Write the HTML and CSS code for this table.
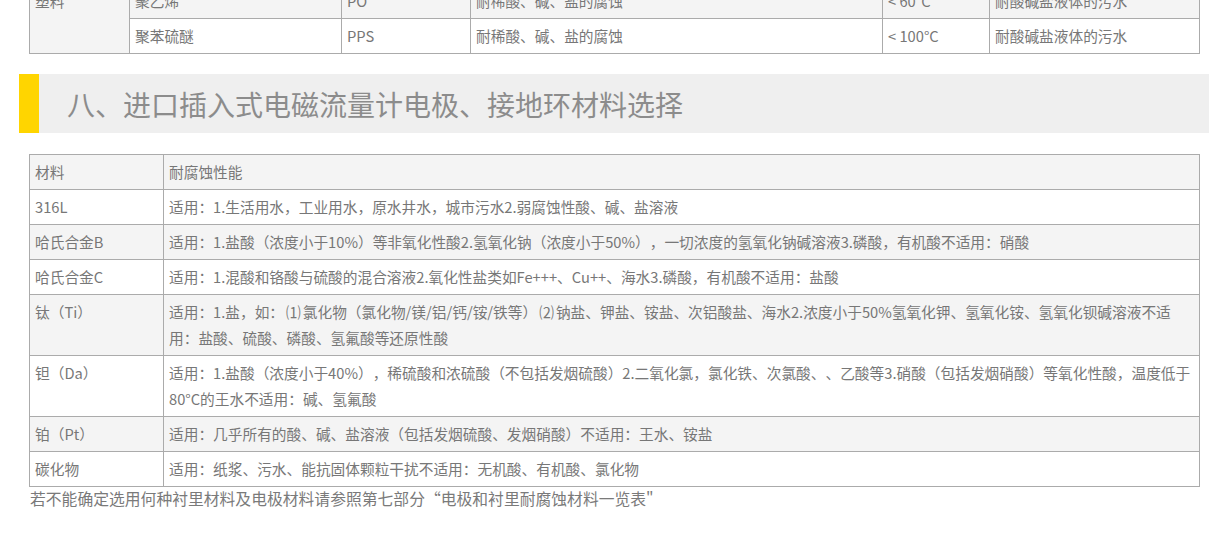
FILE: index.html
```html
<!DOCTYPE html>
<html lang="zh-CN">
<head>
<meta charset="utf-8">
<title>电极、接地环材料选择</title>
<link rel="stylesheet" href="styles.css">
</head>
<body>
<div class="page">
  <table class="grid top-grid">
    <colgroup>
      <col class="c1"><col class="c2"><col class="c3"><col class="c4"><col class="c5"><col class="c6">
    </colgroup>
    <tr class="alt">
      <td rowspan="2" class="alt span-cell">塑料</td>
      <td>聚乙烯</td><td>PO</td><td>耐稀酸、碱、盐的腐蚀</td><td>&lt; 60°C</td><td>耐酸碱盐液体的污水</td>
    </tr>
    <tr>
      <td>聚苯硫醚</td><td>PPS</td><td>耐稀酸、碱、盐的腐蚀</td><td>&lt; 100°C</td><td>耐酸碱盐液体的污水</td>
    </tr>
  </table>

  <h2 class="section-title"><span class="bar"></span><span class="title-text">八、进口插入式电磁流量计电极、接地环材料选择</span></h2>

  <table class="grid mat-grid">
    <colgroup><col class="m1"><col class="m2"></colgroup>
    <tr class="alt"><td>材料</td><td>耐腐蚀性能</td></tr>
    <tr><td>316L</td><td>适用：1.生活用水，工业用水，原水井水，城市污水2.弱腐蚀性酸、碱、盐溶液</td></tr>
    <tr class="alt"><td>哈氏合金B</td><td>适用：1.盐酸（浓度小于10%）等非氧化性酸2.氢氧化钠（浓度小于50%），一切浓度的氢氧化钠碱溶液3.磷酸，有机酸不适用：硝酸</td></tr>
    <tr><td>哈氏合金C</td><td>适用：1.混酸和铬酸与硫酸的混合溶液2.氧化性盐类如Fe+++、Cu++、海水3.磷酸，有机酸不适用：盐酸</td></tr>
    <tr class="alt"><td>钛（Ti）</td><td>适用：1.盐，如：<span class="enum">⑴</span>氯化物（氯化物/镁/铝/钙/铵/铁等）<span class="enum">⑵</span>钠盐、钾盐、铵盐、次铝酸盐、海水2.浓度小于50%氢氧化钾、氢氧化铵、氢氧化钡碱溶液不适用：盐酸、硫酸、磷酸、氢氟酸等还原性酸</td></tr>
    <tr><td>钽（Da）</td><td>适用：1.盐酸（浓度小于40%），稀硫酸和浓硫酸（不包括发烟硫酸）2.二氧化氯，氯化铁、次氯酸、、乙酸等3.硝酸（包括发烟硝酸）等氧化性酸，温度低于80°C的王水不适用：碱、氢氟酸</td></tr>
    <tr class="alt"><td>铂（Pt）</td><td>适用：几乎所有的酸、碱、盐溶液（包括发烟硫酸、发烟硝酸）不适用：王水、铵盐</td></tr>
    <tr><td>碳化物</td><td>适用：纸浆、污水、能抗固体颗粒干扰不适用：无机酸、有机酸、氯化物</td></tr>
  </table>
  <p class="note">若不能确定选用何种衬里材料及电极材料请参照第七部分“电极和衬里耐腐蚀材料一览表"</p>
</div>
</body>
</html>
```

FILE: styles.css
```css
html, body {
  margin: 0;
  padding: 0;
  background: #ffffff;
}
body {
  font-family: "Noto Sans CJK SC", "Noto Sans", sans-serif;
  color: #777777;
  text-spacing-trim: space-all;
}
.page {
  width: 1190px;
  padding: 0 19px;
}
.grid {
  border-collapse: collapse;
  table-layout: fixed;
  width: 1170px;
  margin: 0 10px;
  font-size: 14.7px;
  line-height: 26px;
}
.grid td {
  border: 1px solid #ababab;
  padding: 4px 6px 4px 5px;
  vertical-align: top;
  white-space: normal;
  word-break: break-all;
}
.grid tr.alt td,
.grid td.alt {
  background: #f4f4f4;
}
.enum {
  margin: 0 2px;
}
.top-grid {
  margin-top: -17px;
}
.top-grid .c1 { width: 100px; }
.top-grid .c2 { width: 212px; }
.top-grid .c3 { width: 129px; }
.top-grid .c4 { width: 412px; }
.top-grid .c5 { width: 107px; }
.top-grid .c6 { width: 210px; }
.top-grid td.span-cell {
  vertical-align: top;
}
.section-title {
  display: flex;
  align-items: center;
  height: 59px;
  margin: 20px 0 21px;
  background: #efefef;
  font-weight: normal;
}
.bar {
  width: 20px;
  align-self: stretch;
  background: #ffd500;
}
.title-text {
  margin-left: 28px;
  font-size: 28px;
  line-height: 40px;
  color: #8c8c8c;
}
.mat-grid .m1 { width: 134px; }
.mat-grid .m2 { width: 1036px; }
.note {
  margin: 0 0 0 11px;
  font-size: 15.8px;
  line-height: 24px;
  color: #7a7a7a;
}
```
